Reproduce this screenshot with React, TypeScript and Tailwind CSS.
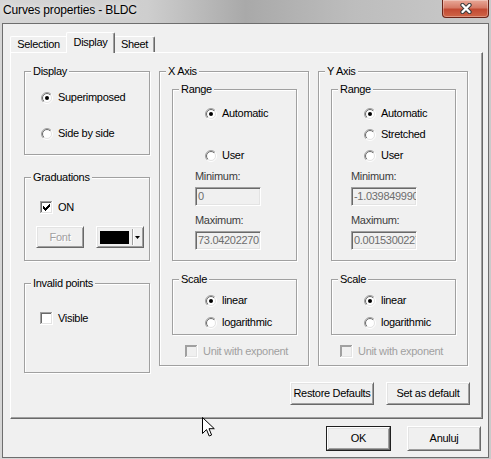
import React from 'react';

const ui = "font-['Liberation_Sans',Arial,sans-serif] text-[11px] leading-[13px] tracking-[-0.3px] text-black";

const raised =
  'border border-t-white border-l-white border-r-[#696969] border-b-[#696969] shadow-[inset_1px_1px_0_#e3e3e3,inset_-1px_-1px_0_#a0a0a0]';
const sunken =
  'border border-t-[#a0a0a0] border-l-[#a0a0a0] border-r-white border-b-white shadow-[inset_1px_1px_0_#696969,inset_-1px_-1px_0_#e3e3e3]';

function Radio({ checked = false, label }: { checked?: boolean; label: string }) {
  return (
    <div className="flex h-[13px] items-center gap-[5px]">
      <svg width="12" height="12" viewBox="0 0 12 12" className="shrink-0">
        <circle cx="6" cy="6" r="5.5" fill="none" stroke="url(#rOuter)" />
        <circle cx="6" cy="6" r="4.5" fill="#fff" stroke="url(#rInner)" />
        {checked && <circle cx="6" cy="6" r="2" fill="#000" />}
      </svg>
      <span>{label}</span>
    </div>
  );
}

function CheckBox({ checked = false, disabled = false, label }: { checked?: boolean; disabled?: boolean; label: string }) {
  return (
    <div className="flex h-[13px] items-center gap-[5px]">
      <svg width="13" height="13" viewBox="0 0 13 13" className="shrink-0" shapeRendering="crispEdges">
        <rect x="0" y="0" width="13" height="13" fill={disabled ? '#f0f0f0' : '#fff'} />
        <path d="M0.5 13V0.5H13" fill="none" stroke="#a0a0a0" />
        <path d="M0 12.5H12.5V0" fill="none" stroke="#fff" />
        <path d="M1.5 12V1.5H12" fill="none" stroke={disabled ? '#a0a0a0' : '#696969'} />
        <path d="M1 11.5H11.5V1" fill="none" stroke="#e3e3e3" />
        {checked && <path d="M3 5H4V6H5V7H6V6H7V5H8V4H9V3H10V6H9V7H8V8H7V9H6V10H5V9H4V8H3Z" fill="#000" />}
      </svg>
      <span className={disabled ? 'text-[#a0a0a0]' : ''}>{label}</span>
    </div>
  );
}

function Group({ label, className = '', children }: { label: string; className?: string; children?: React.ReactNode }) {
  return (
    <fieldset className={`m-0 min-w-0 border border-[#a0a0a0] p-0 shadow-[inset_1px_1px_0_#fff,1px_1px_0_#fff] ${className}`}>
      <legend className="ml-[6px] bg-[#f0f0f0] px-[2px] leading-[13px]">{label}</legend>
      {children}
    </fieldset>
  );
}

function Field({ value }: { value: string }) {
  return (
    <div className={`h-[19px] w-[66px] overflow-hidden whitespace-nowrap bg-[#f0f0f0] pl-[2px] pt-[2px] text-[#6d6d6d] ${sunken}`}>
      {value}
    </div>
  );
}

function Button({ label, className = '' }: { label: string; className?: string }) {
  return <div className={`flex items-center justify-center bg-[#f0f0f0] ${raised} ${className}`}>{label}</div>;
}

function Axis({ title, stretched, min, max, inset, unitInset }: { title: string; stretched: boolean; min: string; max: string; inset: string; unitInset: string }) {
  return (
    <Group label={title} className="h-[301px] w-[150px]">
      <Group label="Range" className="ml-[12px] mt-[5px] h-[178px] w-[125px]">
        <div className="flex flex-col pl-[32px] pt-[11px]">
          <Radio checked label="Automatic" />
          <div className="mt-[8px] h-[13px]">{stretched && <Radio label="Stretched" />}</div>
          <div className="mt-[8px]">
            <Radio label="User" />
          </div>
        </div>
        <div className={`flex flex-col ${inset}`}>
          <span className="mt-[8px] text-[#3c3c3c]">Minimum:</span>
          <div className="mt-[4px]">
            <Field value={min} />
          </div>
          <span className="mt-[8px] text-[#3c3c3c]">Maximum:</span>
          <div className="mt-[4px]">
            <Field value={max} />
          </div>
        </div>
      </Group>
      <Group label="Scale" className="ml-[12px] mt-[12px] h-[62px] w-[125px]">
        <div className="flex flex-col pl-[32px] pt-[8px]">
          <Radio checked label="linear" />
          <div className="mt-[9px]">
            <Radio label="logarithmic" />
          </div>
        </div>
      </Group>
      <div className={`mt-[10px] ${unitInset}`}>
        <CheckBox disabled label="Unit with exponent" />
      </div>
    </Group>
  );
}

export default function App() {
  return (
    <div
      className={`relative h-[459px] w-[491px] overflow-hidden bg-[linear-gradient(90deg,#d6d6d6_0%,#cecece_30%,#a9a9a9_50%,#bdbdbd_72%,#cacaca_100%)] ${ui}`}
    >
      <svg width="0" height="0" className="block">
        <defs>
          <linearGradient id="rOuter" x1="0" y1="0" x2="1" y2="1">
            <stop offset="0" stopColor="#a0a0a0" />
            <stop offset="0.5" stopColor="#a0a0a0" />
            <stop offset="0.5" stopColor="#ffffff" />
            <stop offset="1" stopColor="#ffffff" />
          </linearGradient>
          <linearGradient id="rInner" x1="0" y1="0" x2="1" y2="1">
            <stop offset="0" stopColor="#696969" />
            <stop offset="0.5" stopColor="#696969" />
            <stop offset="0.5" stopColor="#e3e3e3" />
            <stop offset="1" stopColor="#e3e3e3" />
          </linearGradient>
        </defs>
      </svg>

      {/* title bar */}
      <div className="flex h-[23px] items-start justify-between">
        <div className="pl-[3px] pt-[3px] text-[12px] leading-[15px] tracking-[-0.15px] [text-shadow:0_0_6px_#fff]">
          Curves properties - BLDC
        </div>
        <div className="mr-[2px] flex h-[18px] w-[47px] items-center justify-center rounded-b-[4px] border border-t-0 border-[#6a2418] bg-[linear-gradient(#e8a898_0%,#d67a66_45%,#c24a33_55%,#cf6547_100%)] shadow-[inset_0_0_0_1px_rgba(255,255,255,0.3)]">
          <svg width="14" height="11" viewBox="0 0 14 11">
            <path d="M3.5 2L10.5 9M10.5 2L3.5 9" stroke="#3d3d3d" strokeWidth="4.4" strokeLinecap="round" />
            <path d="M3.5 2L10.5 9M10.5 2L3.5 9" stroke="#fff" strokeWidth="2.4" strokeLinecap="round" />
          </svg>
        </div>
      </div>

      {/* client area */}
      <div className="mx-[2px] h-[435px] border border-[#6e6e6e] bg-[#f0f0f0]">
        <div className="ml-[7px] mt-[8px] flex h-[20px] items-end">
          <div className="flex h-[16px] w-[56px] items-center justify-center rounded-tl-[2px] border-l border-t border-l-white border-t-white">
            Selection
          </div>
          <div className="relative z-10 -mb-px flex h-[21px] w-[49px] items-start justify-center rounded-t-[2px] border-l border-r border-t border-l-white border-r-[#696969] border-t-white bg-[#f0f0f0] pt-[3px] shadow-[inset_-1px_0_0_#a0a0a0]">
            Display
          </div>
          <div className="flex h-[16px] w-[40px] items-center justify-center rounded-tr-[2px] border-r border-t border-r-[#696969] border-t-white shadow-[inset_-1px_0_0_#a0a0a0]">
            Sheet
          </div>
        </div>

        <div className="ml-[7px] h-[367px] w-[473px] border border-t-white border-l-white border-r-[#696969] border-b-[#696969] pl-[13px] pt-[12px] shadow-[inset_-1px_-1px_0_#a0a0a0]">
          <div className="flex items-start gap-[9px]">
            <div className="flex w-[126px] flex-col">
              <Group label="Display" className="h-[90px]">
                <div className="flex flex-col pl-[16px] pt-[13px]">
                  <Radio checked label="Superimposed" />
                  <div className="mt-[23px]">
                    <Radio label="Side by side" />
                  </div>
                </div>
              </Group>
              <Group label="Graduations" className="mt-[16px] h-[90px]">
                <div className="pl-[15px] pt-[17px]">
                  <CheckBox checked label="ON" />
                </div>
                <div className="mt-[12px] flex pl-[11px]">
                  <Button label="Font" className="h-[22px] w-[48px] text-[#a0a0a0] [text-shadow:1px_1px_0_#fff]" />
                  <div className={`ml-[12px] flex h-[22px] w-[48px] items-center bg-[#f0f0f0] ${raised}`}>
                    <div className="ml-[3px] h-[13px] w-[29px] bg-black" />
                    <div className="ml-[3px] h-[16px] w-px bg-[#a0a0a0] shadow-[1px_0_0_#fff]" />
                    <svg width="5" height="3" viewBox="0 0 5 3" className="ml-[2px]">
                      <path d="M0 0H5L2.5 3Z" fill="#000" />
                    </svg>
                  </div>
                </div>
              </Group>
              <Group label="Invalid points" className="mt-[16px] h-[96px]">
                <div className="pl-[15px] pt-[22px]">
                  <CheckBox label="Visible" />
                </div>
              </Group>
            </div>
            <Axis title="X Axis" stretched={false} min="0" max="73.04202270" inset="pl-[22px]" unitInset="pl-[25px]" />
            <Axis title="Y Axis" stretched min="-1.039849990" max="0.0015300227" inset="pl-[19px]" unitInset="pl-[21px]" />
          </div>
          <div className="mt-[9px] flex justify-end gap-[12px] pr-[12px]">
            <Button label="Restore Defaults" className="h-[23px] w-[84px]" />
            <Button label="Set as default" className="h-[23px] w-[84px]" />
          </div>
        </div>

        <div className="mt-[7px] flex justify-end gap-[16px] pr-[7px]">
          <div className="border border-[#202020]">
            <Button label="OK" className="h-[23px] w-[63px]" />
          </div>
          <Button label="Anuluj" className="h-[25px] w-[74px]" />
        </div>
      </div>

      {/* mouse pointer */}
      <svg width="13" height="20" viewBox="0 0 13 20" className="absolute left-[202px] top-[417px]">
        <path d="M0.5 0.5V16.5L4.5 12.6L7.2 19L9.6 18L7 11.7H12.3Z" fill="#fff" stroke="#000" strokeLinejoin="miter" />
      </svg>
    </div>
  );
}
